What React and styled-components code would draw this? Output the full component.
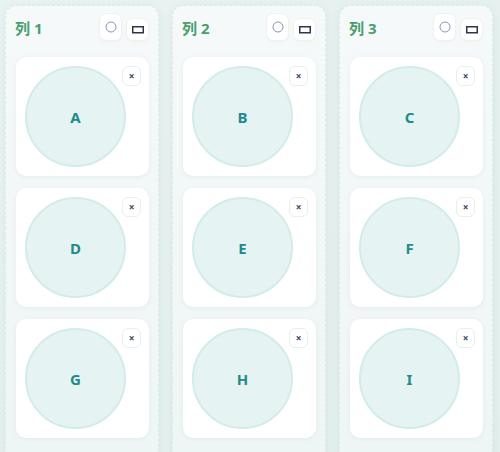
import styled, { createGlobalStyle } from 'styled-components';

const GlobalStyle = createGlobalStyle`
  html, body {
    margin: 0;
    padding: 0;
    width: 500px;
    height: 452px;
    overflow: hidden;
    background: linear-gradient(135deg, #e9f3f1 0%, #e3efed 100%);
    font-family: "Noto Sans", "Noto Sans CJK SC", sans-serif;
  }
`;

const columns = [
  { title: '列 1', items: ['A', 'D', 'G'] },
  { title: '列 2', items: ['B', 'E', 'H'] },
  { title: '列 3', items: ['C', 'F', 'I'] },
];

function App() {
  return (
    <Board>
      <GlobalStyle />
      {columns.map((col) => (
        <Column key={col.title}>
          <Header>
            <Title>{col.title}</Title>
            <Tools>
              <ToolButton $tall>
                <svg width="12" height="12" viewBox="0 0 12 12">
                  <circle cx="6" cy="6" r="5" fill="none" stroke="#8a94b8" strokeWidth="1" />
                </svg>
              </ToolButton>
              <ToolButton>
                <svg width="12" height="8" viewBox="0 0 12 8">
                  <rect x="0.75" y="0.75" width="10.5" height="6" fill="none" stroke="#2c3550" strokeWidth="1.5" />
                </svg>
              </ToolButton>
            </Tools>
          </Header>
          <CardList>
            {col.items.map((it) => (
              <Card key={it}>
                <Bubble>{it}</Bubble>
                <CloseButton>×</CloseButton>
              </Card>
            ))}
          </CardList>
        </Column>
      ))}
    </Board>
  );
}

export default App;

const Board = styled.div`
  display: flex;
  gap: 13px;
  padding: 5px 0 0 5px;
  align-items: flex-start;
`;

const Column = styled.div`
  width: 154px;
  box-sizing: border-box;
  height: 460px;
  padding: 7px 9px 12px 10px;
  border-radius: 12px;
  border: 1px dashed #dcebe8;
  background: linear-gradient(180deg, #f5f9f9 0%, #eef6f5 100%);
  box-shadow: 0 2px 8px rgba(120, 160, 155, 0.12);
`;

const Header = styled.div`
  display: flex;
  align-items: flex-end;
  justify-content: space-between;
  height: 28px;
  margin-bottom: 16px;
`;

const Title = styled.div`
  font-size: 15px;
  font-weight: 700;
  color: #45a06c;
  align-self: center;
  margin-left: -1px;
  margin-top: 1px;
`;

const Tools = styled.div`
  display: flex;
  align-items: flex-end;
  gap: 4px;
`;

const ToolButton = styled.div`
  width: 23px;
  height: ${(p) => (p.$tall ? '28px' : '23px')};
  border-radius: 7px;
  background: #ffffff;
  border: 1px solid #edf3f2;
  box-sizing: border-box;
  display: flex;
  align-items: center;
  justify-content: center;
  box-shadow: 0 1px 2px rgba(0, 0, 0, 0.03);
`;

const CardList = styled.div`
  display: flex;
  flex-direction: column;
  gap: 12px;
`;

const Card = styled.div`
  position: relative;
  height: 119px;
  box-sizing: border-box;
  padding: 9px;
  border-radius: 10px;
  background: #ffffff;
  box-shadow: 0 1px 4px rgba(100, 140, 135, 0.1);
`;

const Bubble = styled.div`
  width: 101px;
  height: 101px;
  box-sizing: border-box;
  border-radius: 50%;
  background: #e5f4f3;
  border: 2px solid #d2ecea;
  display: flex;
  align-items: center;
  justify-content: center;
  font-size: 15px;
  font-weight: 700;
  color: #208a8c;
`;

const CloseButton = styled.div`
  position: absolute;
  top: 9px;
  right: 8px;
  width: 19px;
  height: 20px;
  box-sizing: border-box;
  border-radius: 6px;
  border: 1px solid #e8efee;
  background: #ffffff;
  display: flex;
  align-items: center;
  justify-content: center;
  font-size: 10px;
  line-height: 1;
  font-weight: 700;
  color: #3a4560;
`;
